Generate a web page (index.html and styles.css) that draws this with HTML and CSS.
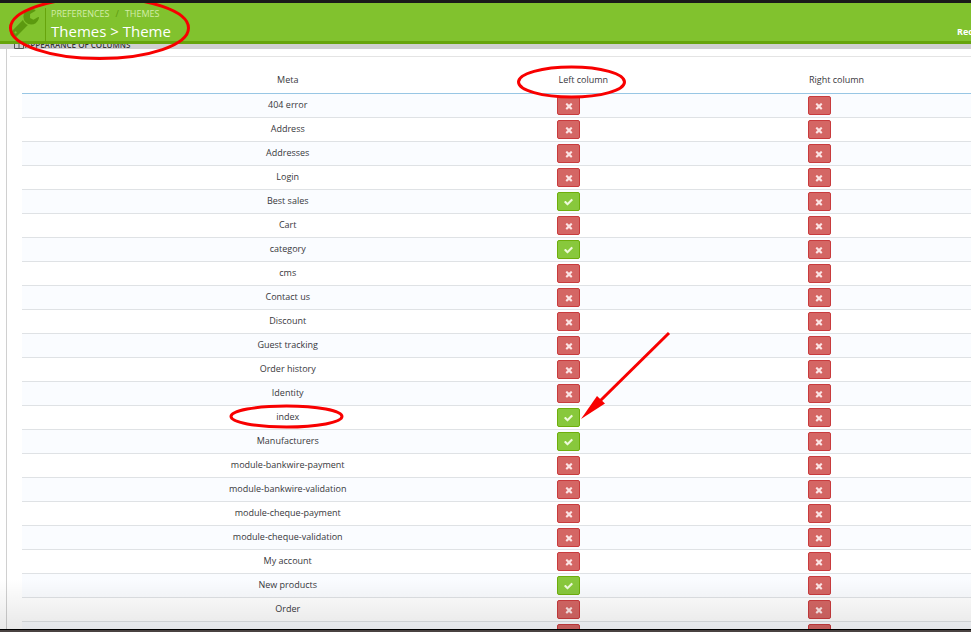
FILE: index.html
```html
<!DOCTYPE html>
<html lang="en">
<head>
  <meta charset="utf-8" />
  <meta name="viewport" content="width=device-width, initial-scale=1.0"/>
  <title>Themes > Theme</title>
  <link rel="stylesheet" href="styles.css">
</head>
<body>

  <!-- Header -->
  <header class="page-head">
    <svg class="wrench" viewBox="64 128 1664 1664" aria-hidden="true"><path d="M448 1472q0-26-19-45t-45-19-45 19-19 45 19 45 45 19 45-19 19-45zm644-420l-682 682q-37 37-90 37-52 0-91-37l-106-108q-38-36-38-90 0-53 38-91l681-681q39 98 114.500 173.500t173.500 114.500zm634-435q0 39-23 106-47 134-164.500 217.500t-258.500 83.500q-185 0-316.500-131.500t-131.500-316.500 131.500-316.500 316.500-131.500q58 0 121.500 16.500t107.500 46.500q16 11 16 28t-16 28l-293 169v224l193 107q5-3 79-48.500t135.500-81 70.500-35.500q15 0 23.500 10t8.500 25z"/></svg>
    <div class="head-text">
      <nav class="breadcrumb">
        <a href="#">PREFERENCES</a>
        <span class="sep">/</span>
        <a href="#">THEMES</a>
      </nav>
      <h1>Themes &gt; Theme</h1>
    </div>
    <a class="head-link" href="#">Rec</a>
  </header>

  <main class="content">
    <section class="panel">
      <h2 class="panel-heading">
        <svg viewBox="0 0 10 10" aria-hidden="true"><path d="M.5 1.500h9v8h-9zM5 1.500v8M0 2.500h10"/></svg>
        <span>APPEARANCE OF COLUMNS</span>
      </h2>
      <div class="panel-body">
        <table>
          <thead>
            <tr><th class="meta">Meta</th><th class="left">Left column</th><th>Right column</th></tr>
          </thead>
          <tbody id="rows"></tbody>
        </table>
      </div>
    </section>
  </main>

  <footer class="screen-edge"></footer>

  <!-- Red marks over the page -->
  <svg class="marks" width="971" height="632" aria-hidden="true">
    <ellipse cx="99.500" cy="28" rx="89" ry="30.500"/>
    <ellipse cx="571.500" cy="82" rx="53" ry="15"/>
    <ellipse cx="286.500" cy="416.500" rx="55.500" ry="10.500"/>
    <path d="M669 333L600 401"/>
    <path class="tip" d="M581 419L597 396L605 403.500Z"/>
  </svg>

<script src="script.js"></script>
</body>
</html>
```

FILE: styles.css
```css
:root {
  --green:      #81c22e;
  --green-dark: #67a40c;
  --line:       #dfe2e5;
  --text:       #38383c;
}
*, *::before, *::after { box-sizing: border-box; margin:0; padding:0; }
body {
  font-family: "Open Sans","Noto Sans",sans-serif;
  font-size:9px;
  color: var(--text);
  background:#fff;
  height:100vh;overflow:hidden;position:relative;
  display:flex;flex-direction:column;
  border-top:3px solid #1a1a1a;
}
a { color:inherit;text-decoration:none; }

/* Header */
.page-head {
  flex:none;height:41px;
  display:flex;align-items:stretch;
  padding-left:10px;
  background:var(--green);
  border-bottom:3px solid var(--green-dark);
  color:#fff;
}
.wrench { width:29px;height:29px;margin-top:6px;fill:#5c990f; }
.head-text {
  margin:5px 0 0 6px;padding-left:5px;
  border-left:1px solid var(--green-dark);
}
.breadcrumb { display:flex;gap:6px;line-height:12px;color:#d3eda8; }
.breadcrumb .sep { color:#5c990f; }
h1 { font-size:15px;font-weight:400;line-height:22px; }
.head-link { margin:23px -2px 0 auto;font-weight:700;line-height:12px; }

/* Panel */
.content { flex:1;min-height:0;overflow:hidden;position:relative; }
.content::before {
  content:"";display:block;height:5px;margin-bottom:-5px;background:#d0cfd0;
}
.content::after {
  content:"";position:absolute;left:0;right:0;bottom:0;height:50px;
  background:linear-gradient(rgba(0,0,0,0),rgba(0,0,0,.09));
  pointer-events:none;
}
.panel { position:relative;margin-left:6px;border-left:1px solid #d0d0d0; }
.panel-heading {
  display:flex;align-items:flex-end;gap:1px;
  height:5px;margin-left:7px;overflow:hidden;
  font-size:8px;font-weight:600;line-height:8px;
}
.panel-heading svg { width:10px;height:10px;fill:none;stroke:#555;flex:none; }
.panel-body {
  margin:7px 0 0 3px;padding:12px 0 0 12px;
  border-top:1px solid #e4e4e4;
}

/* Table */
table { width:100%;table-layout:fixed;border-collapse:separate;border-spacing:0; }
th { height:25px;font-weight:400;line-height:12px;text-align:left;padding:0 0 2px 5px;border-bottom:1px solid #98c6e4; }
td { height:24px;padding-left:4px;border-bottom:1px solid var(--line);line-height:12px; }
.meta { width:56%;text-align:center;padding:0 0 2px; }
.left { width:26.4%; }
tbody tr:nth-child(odd) { background:#fafcff; }

.toggle {
  display:flex;align-items:center;justify-content:center;
  width:23px;height:19px;padding-top:1px;
  border:1px solid #c83b3d;border-radius:2px;
  background:#d46664;cursor:pointer;
}
.toggle svg { width:10px;height:10px;fill:#fbe3e3; }
.toggle.on { background:#88c83c;border-color:#6eae0c; }
.toggle.on svg { width:11px;fill:#eefadb; }

.screen-edge { flex:none;height:3px;background:#4a4341;border-top:1px solid #000; }

.marks { position:absolute;top:-3px;left:0;pointer-events:none;fill:none;stroke:#f80000;stroke-width:3; }
.marks .tip { fill:#f80000;stroke:none; }
```

FILE: script.js
```js
const CROSS = 'M1490 1322q0 40-28 68l-136 136q-28 28-68 28t-68-28l-294-294-294 294q-28 28-68 28t-68-28l-136-136q-28-28-28-68t28-68l294-294-294-294q-28-28-28-68t28-68l136-136q28-28 68-28t68 28l294 294 294-294q28-28 68-28t68 28l136 136q28 28 28 68t-28 68l-294 294 294 294q28 28 28 68z';
const CHECK = 'M1671 566q0 40-28 68l-724 724-136 136q-28 28-68 28t-68-28l-136-136-362-362q-28-28-28-68t28-68l136-136q28-28 68-28t68 28l294 295 656-657q28-28 68-28t68 28l136 136q28 28 28 68z';

const pages = [
  '404 error', 'Address', 'Addresses', 'Login', 'Best sales', 'Cart',
  'category', 'cms', 'Contact us', 'Discount', 'Guest tracking',
  'Order history', 'Identity', 'index', 'Manufacturers',
  'module-bankwire-payment', 'module-bankwire-validation',
  'module-cheque-payment', 'module-cheque-validation',
  'My account', 'New products', 'Order', ''
];
const leftOn = ['Best sales', 'category', 'index', 'Manufacturers', 'New products'];

function toggle(on) {
  return `<button type="button" class="toggle${on ? ' on' : ''}" aria-label="${on ? 'Enabled' : 'Disabled'}">
    <svg viewBox="0 0 1792 1792"><path d="${on ? CHECK : CROSS}"/></svg>
  </button>`;
}

document.getElementById('rows').innerHTML = pages.map(p => `
  <tr>
    <td class="meta">${p}</td>
    <td>${toggle(leftOn.includes(p))}</td>
    <td>${toggle(false)}</td>
  </tr>`).join('');
```
